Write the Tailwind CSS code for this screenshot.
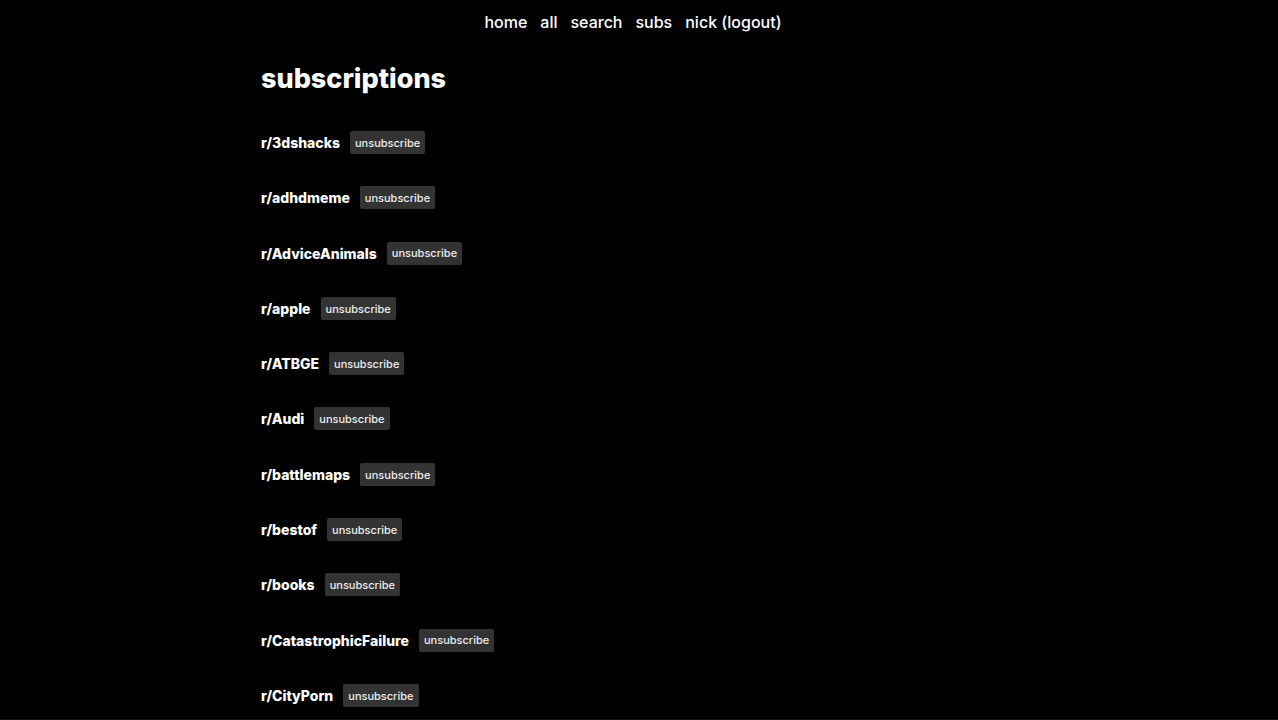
<!DOCTYPE html>
<html lang="en">
<head>
<meta charset="utf-8">
<title>subscriptions</title>
<script src="https://cdn.jsdelivr.net/npm/@tailwindcss/browser@4"></script>
</head>
<body class="bg-black text-white font-['Inter','Liberation_Sans',sans-serif]">
<div class="flex min-h-screen flex-col border-b border-[#1c1214]">
<nav class="flex justify-center gap-[13px] pt-2.5 pr-3 text-base leading-6 font-medium">
<a href="#">home</a><a href="#">all</a><a href="#">search</a><a href="#">subs</a><a href="#">nick (logout)</a>
</nav>
<main class="mx-auto flex w-full max-w-[756px] flex-1 flex-col pt-[25px] pb-3">
<h1 class="text-[27px] leading-10 font-extrabold">subscriptions</h1>
<ul class="mt-8 flex flex-1 flex-col justify-between text-[14px] font-extrabold">
<li class="flex items-center gap-2.5"><a href="#">r/3dshacks</a><button type="button" class="h-[23px] rounded-xs bg-[#333] px-[5px] pt-px text-[11px] font-medium text-[#eee]">unsubscribe</button></li>
<li class="flex items-center gap-2.5"><a href="#">r/adhdmeme</a><button type="button" class="h-[23px] rounded-xs bg-[#333] px-[5px] pt-px text-[11px] font-medium text-[#eee]">unsubscribe</button></li>
<li class="flex items-center gap-2.5"><a href="#">r/AdviceAnimals</a><button type="button" class="h-[23px] rounded-xs bg-[#333] px-[5px] pt-px text-[11px] font-medium text-[#eee]">unsubscribe</button></li>
<li class="flex items-center gap-2.5"><a href="#">r/apple</a><button type="button" class="h-[23px] rounded-xs bg-[#333] px-[5px] pt-px text-[11px] font-medium text-[#eee]">unsubscribe</button></li>
<li class="flex items-center gap-2.5"><a href="#">r/ATBGE</a><button type="button" class="h-[23px] rounded-xs bg-[#333] px-[5px] pt-px text-[11px] font-medium text-[#eee]">unsubscribe</button></li>
<li class="flex items-center gap-2.5"><a href="#">r/Audi</a><button type="button" class="h-[23px] rounded-xs bg-[#333] px-[5px] pt-px text-[11px] font-medium text-[#eee]">unsubscribe</button></li>
<li class="flex items-center gap-2.5"><a href="#">r/battlemaps</a><button type="button" class="h-[23px] rounded-xs bg-[#333] px-[5px] pt-px text-[11px] font-medium text-[#eee]">unsubscribe</button></li>
<li class="flex items-center gap-2.5"><a href="#">r/bestof</a><button type="button" class="h-[23px] rounded-xs bg-[#333] px-[5px] pt-px text-[11px] font-medium text-[#eee]">unsubscribe</button></li>
<li class="flex items-center gap-2.5"><a href="#">r/books</a><button type="button" class="h-[23px] rounded-xs bg-[#333] px-[5px] pt-px text-[11px] font-medium text-[#eee]">unsubscribe</button></li>
<li class="flex items-center gap-2.5"><a href="#">r/CatastrophicFailure</a><button type="button" class="h-[23px] rounded-xs bg-[#333] px-[5px] pt-px text-[11px] font-medium text-[#eee]">unsubscribe</button></li>
<li class="flex items-center gap-2.5"><a href="#">r/CityPorn</a><button type="button" class="h-[23px] rounded-xs bg-[#333] px-[5px] pt-px text-[11px] font-medium text-[#eee]">unsubscribe</button></li>
</ul>
</main>
</div>
</body>
</html>
